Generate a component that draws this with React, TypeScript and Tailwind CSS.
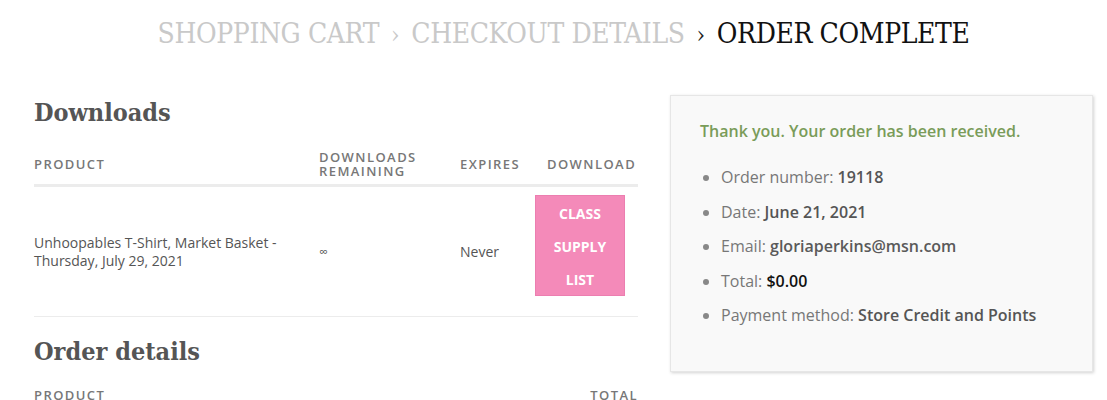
import React from "react";

const serif = { fontFamily: "'DejaVu Serif Condensed', 'DejaVu Serif', serif" };

export default function App() {
  return (
    <div className="w-[1107px] h-[400px] overflow-hidden bg-white" style={{ fontFamily: "'Open Sans', sans-serif" }}>
      <div className="pt-[14px] pl-[20px] h-[54px] flex justify-center">
        <div className="text-[28px] leading-[40px] tracking-[-0.4px] whitespace-nowrap" style={serif}>
          <span className="text-[#c9c9c9]">SHOPPING CART</span>
          <span className="text-[#c9c9c9] mx-[12px] text-[24px]">›</span>
          <span className="text-[#c9c9c9]">CHECKOUT DETAILS</span>
          <span className="text-[#222] mx-[12px] text-[24px]">›</span>
          <span className="text-[#111]">ORDER COMPLETE</span>
        </div>
      </div>
      <div className="flex mt-[41px] pl-[34px] gap-[32px]">
        <div className="w-[604px] shrink-0">
          <h2 className="text-[25px] leading-[36px] font-bold text-[#555]" style={serif}>Downloads</h2>
          <div className="mt-[12px] grid grid-cols-[273px_141px_87px_103px] h-[44px] items-center border-b-[3px] border-[#ececec] text-[13px] leading-[14px] font-semibold tracking-[0.11em] text-[#777]">
            <div>PRODUCT</div>
            <div className="pl-[12px]">DOWNLOADS<br />REMAINING</div>
            <div className="pl-[12px]">EXPIRES</div>
            <div className="pl-[12px]">DOWNLOAD</div>
          </div>
          <div className="grid grid-cols-[273px_141px_87px_103px] h-[130px] items-center border-b border-[#ececec] text-[14px] leading-[18px] text-[#555]">
            <div>Unhoopables T-Shirt, Market Basket -<br />Thursday, July 29, 2021</div>
            <div className="pl-[12px] text-[12px]">∞</div>
            <div className="pl-[12px]">Never</div>
            <div className="self-start mt-[8px]">
              <div className="w-[90px] h-[101px] bg-[#f48ab9] border border-[#ec7eb0] text-white text-[14px] font-bold leading-[33px] text-center pt-[1px]">
                CLASS<br />SUPPLY<br />LIST
              </div>
            </div>
          </div>
          <h2 className="mt-[17px] text-[25px] leading-[36px] font-bold text-[#555]" style={serif}>Order details</h2>
          <div className="mt-[4px] flex justify-between h-[44px] items-center text-[13px] font-semibold tracking-[0.11em] text-[#777]">
            <div>PRODUCT</div>
            <div>TOTAL</div>
          </div>
        </div>
        <div className="w-[423px] h-[277px] shrink-0 bg-[#f9f9f9] border border-[#e6e6e6] shadow-[1px_1px_3px_rgba(0,0,0,0.18)] px-[29px] pt-[24px]">
          <p className="text-[16px] leading-[22px] font-semibold text-[#7a9c59]">Thank you. Your order has been received.</p>
          <ul className="mt-[18px] list-disc pl-[21px] text-[16px] leading-[34.5px] text-[#777] marker:text-[#888]">
            <li>Order number: <strong className="font-semibold text-[#555]">19118</strong></li>
            <li>Date: <strong className="font-semibold text-[#555]">June 21, 2021</strong></li>
            <li>Email: <strong className="font-semibold text-[#5a5a5a]">gloriaperkins@msn.com</strong></li>
            <li>Total: <strong className="font-semibold text-[#111]">$0.00</strong></li>
            <li>Payment method: <strong className="font-semibold text-[#555]">Store Credit and Points</strong></li>
          </ul>
        </div>
      </div>
    </div>
  );
}
